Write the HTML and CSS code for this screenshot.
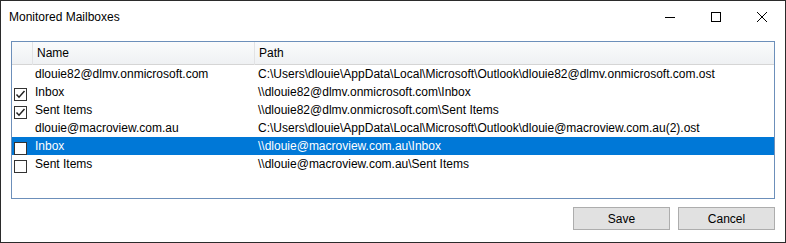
FILE: index.html
```html
<!DOCTYPE html>
<html>
<head>
  <title>Monitored Mailboxes</title>
  <link rel="stylesheet" href="styles.css">
</head>
<body>
  <div class="window">
    <div class="titlebar">
      <span class="title">Monitored Mailboxes</span>
      <div class="controls">
        <span class="control">
          <svg width="10" height="10" viewBox="0 0 10 10"><path d="M0 5.5 H10" stroke="#000" stroke-width="1"/></svg>
        </span>
        <span class="control">
          <svg width="10" height="10" viewBox="0 0 10 10"><rect x="0.5" y="0.5" width="9" height="9" fill="none" stroke="#000" stroke-width="1"/></svg>
        </span>
        <span class="control">
          <svg width="10" height="10" viewBox="0 0 10 10"><path d="M0 0 L10 10 M10 0 L0 10" stroke="#000" stroke-width="1"/></svg>
        </span>
      </div>
    </div>

    <div class="content">
      <div class="listbox">
        <div class="header">
          <div class="head-cell"></div>
          <div class="head-cell">Name</div>
          <div class="head-cell last">Path</div>
        </div>

        <div class="row">
          <div class="check-cell"></div>
          <div class="name">dlouie82@dlmv.onmicrosoft.com</div>
          <div class="path">C:\Users\dlouie\AppData\Local\Microsoft\Outlook\dlouie82@dlmv.onmicrosoft.com.ost</div>
        </div>
        <div class="row">
          <div class="check-cell"><span class="box checked"><svg width="11" height="11" viewBox="0 0 11 11"><path d="M1.5 5.5 L4 8.2 L9.5 2" fill="none" stroke="#222" stroke-width="1.5"/></svg></span></div>
          <div class="name">Inbox</div>
          <div class="path">\\dlouie82@dlmv.onmicrosoft.com\Inbox</div>
        </div>
        <div class="row">
          <div class="check-cell"><span class="box checked"><svg width="11" height="11" viewBox="0 0 11 11"><path d="M1.5 5.5 L4 8.2 L9.5 2" fill="none" stroke="#222" stroke-width="1.5"/></svg></span></div>
          <div class="name">Sent Items</div>
          <div class="path">\\dlouie82@dlmv.onmicrosoft.com\Sent Items</div>
        </div>
        <div class="row">
          <div class="check-cell"></div>
          <div class="name">dlouie@macroview.com.au</div>
          <div class="path">C:\Users\dlouie\AppData\Local\Microsoft\Outlook\dlouie@macroview.com.au(2).ost</div>
        </div>
        <div class="row selected">
          <div class="check-cell"><span class="box"></span></div>
          <div class="name">Inbox</div>
          <div class="path">\\dlouie@macroview.com.au\Inbox</div>
        </div>
        <div class="row">
          <div class="check-cell"><span class="box"></span></div>
          <div class="name">Sent Items</div>
          <div class="path">\\dlouie@macroview.com.au\Sent Items</div>
        </div>
      </div>

      <div class="buttons">
        <button type="button" class="btn">Save</button>
        <button type="button" class="btn">Cancel</button>
      </div>
    </div>
  </div>
</body>
</html>
```

FILE: styles.css
```css
body {
  margin: 0;
  padding: 0;
  background-color: #fff;
  font-family: "Liberation Sans", Arial, sans-serif;
  font-size: 12px;
  color: #000;
}

.window {
  width: 786px;
  height: 243px;
  box-sizing: border-box;
  border: 1px solid #2b2b2b;
  background-color: #fff;
  display: flex;
  flex-direction: column;
}

/* Title bar with caption buttons */
.titlebar {
  height: 31px;
  display: flex;
  align-items: center;
  justify-content: space-between;
}

.title {
  padding-left: 8px;
}

.controls {
  display: flex;
  height: 100%;
}

.control {
  width: 46px;
  display: flex;
  align-items: center;
  justify-content: center;
}

.content {
  flex: 1;
  padding: 9px 10px 0 10px;
  display: flex;
  flex-direction: column;
}

/* List of mailboxes */
.listbox {
  height: 158px;
  box-sizing: border-box;
  border: 1px solid #6c8fba;
}

.header {
  display: grid;
  grid-template-columns: 21px 222px 1fr;
  height: 23px;
  box-sizing: border-box;
  background: linear-gradient(#fafbfc, #eff1f3);
  border-bottom: 1px solid #d5d5d5;
}

.head-cell {
  border-right: 1px solid #e2e3e5;
  padding-left: 4px;
  line-height: 23px;
}

.head-cell.last {
  border-right: none;
}

.row {
  display: grid;
  grid-template-columns: 21px 222px 1fr;
  height: 18px;
  line-height: 19px;
  white-space: nowrap;
}

.row.selected {
  background-color: #0078d7;
  color: #fff;
}

.check-cell {
  padding-left: 2px;
  display: flex;
  align-items: center;
}

.box {
  width: 13px;
  height: 13px;
  box-sizing: border-box;
  border: 1px solid #333;
  background-color: #fff;
  margin-top: 3px;
  display: flex;
  align-items: center;
  justify-content: center;
}

.name {
  padding-left: 2px;
}

.path {
  padding-left: 3px;
}

/* Dialog buttons */
.buttons {
  display: flex;
  justify-content: flex-end;
  gap: 8px;
  margin-top: 8px;
}

.btn {
  width: 97px;
  height: 23px;
  background-color: #e1e1e1;
  border: 1px solid #adadad;
  font-family: "Liberation Sans", Arial, sans-serif;
  font-size: 12px;
  color: #000;
  padding: 0;
}
```
